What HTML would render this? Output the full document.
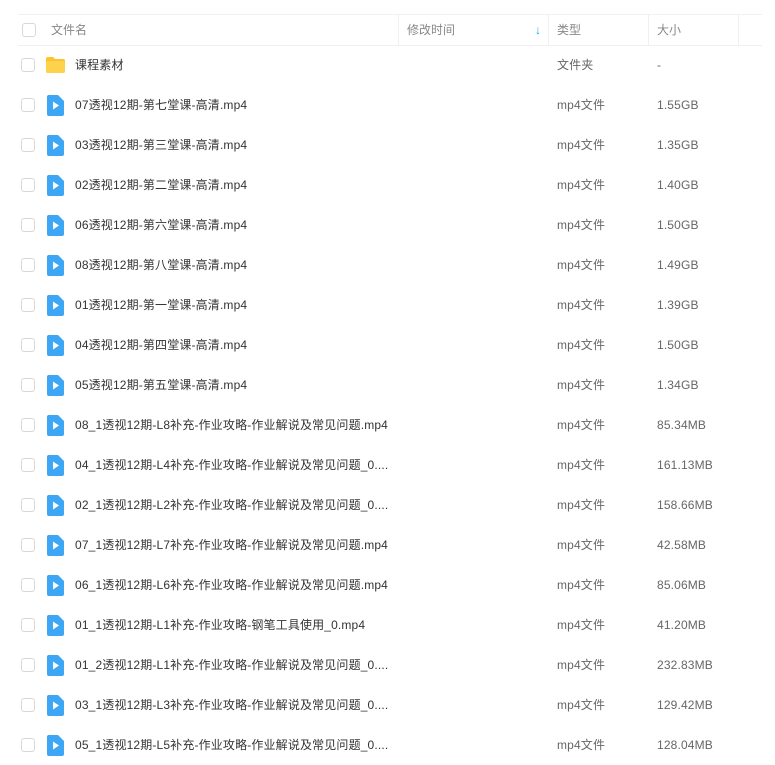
<!DOCTYPE html>
<html><head><meta charset="utf-8"><style>
body{margin:0;background:#fff;font-family:"Liberation Sans","Noto Sans CJK SC",sans-serif;font-size:12px;color:#424e67;}
.hdr{position:absolute;top:14px;left:18px;width:744px;height:30px;border-top:1px solid #f0f0f0;border-bottom:1px solid #f0f0f0;color:#888;}
.hdr span{position:absolute;top:0;line-height:30px;height:30px}
.div{position:absolute;top:0;width:1px;height:30px;background:#f0f0f0}
.cb{position:absolute;width:12px;height:12px;border:1px solid #d8d8d8;border-radius:3px;background:#fff}
.row{position:absolute;left:0;width:775px;height:40px;line-height:40px}
.row .cb{left:21px;top:13px}
.row span{position:absolute;top:0;height:40px;line-height:40px;letter-spacing:0.15px}
.row .n{left:75px;color:#333}
.row .t{left:557px;color:#666}
.row .s{left:657px;color:#666}
.ic{position:absolute;left:47px;top:10px}
</style></head><body>
<div class="hdr">
<div class="cb" style="left:4px;top:8px"></div>
<span style="left:33px">文件名</span>
<div class="div" style="left:380px"></div>
<span style="left:389px">修改时间</span>
<span style="left:517px;color:#09aaff;font-weight:bold">↓</span>
<div class="div" style="left:530px"></div>
<span style="left:539px">类型</span>
<div class="div" style="left:630px"></div>
<span style="left:639px">大小</span>
<div class="div" style="left:720px"></div>
</div>
<div id="rows"></div>
<script>
var d=[["课程素材","文件夹","-",1],
["07透视12期-第七堂课-高清.mp4","mp4文件","1.55GB"],
["03透视12期-第三堂课-高清.mp4","mp4文件","1.35GB"],
["02透视12期-第二堂课-高清.mp4","mp4文件","1.40GB"],
["06透视12期-第六堂课-高清.mp4","mp4文件","1.50GB"],
["08透视12期-第八堂课-高清.mp4","mp4文件","1.49GB"],
["01透视12期-第一堂课-高清.mp4","mp4文件","1.39GB"],
["04透视12期-第四堂课-高清.mp4","mp4文件","1.50GB"],
["05透视12期-第五堂课-高清.mp4","mp4文件","1.34GB"],
["08_1透视12期-L8补充-作业攻略-作业解说及常见问题.mp4","mp4文件","85.34MB"],
["04_1透视12期-L4补充-作业攻略-作业解说及常见问题_0....","mp4文件","161.13MB"],
["02_1透视12期-L2补充-作业攻略-作业解说及常见问题_0....","mp4文件","158.66MB"],
["07_1透视12期-L7补充-作业攻略-作业解说及常见问题.mp4","mp4文件","42.58MB"],
["06_1透视12期-L6补充-作业攻略-作业解说及常见问题.mp4","mp4文件","85.06MB"],
["01_1透视12期-L1补充-作业攻略-钢笔工具使用_0.mp4","mp4文件","41.20MB"],
["01_2透视12期-L1补充-作业攻略-作业解说及常见问题_0....","mp4文件","232.83MB"],
["03_1透视12期-L3补充-作业攻略-作业解说及常见问题_0....","mp4文件","129.42MB"],
["05_1透视12期-L5补充-作业攻略-作业解说及常见问题_0....","mp4文件","128.04MB"]];
var h="";
d.forEach(function(r,i){
var ic=r[3]?'<svg class="ic" style="left:45px;top:11px" width="21" height="18"><path d="M1 3a2 2 0 0 1 2-2h5l2 2h8a2 2 0 0 1 2 2v10a2 2 0 0 1-2 2H3a2 2 0 0 1-2-2z" fill="#ffc22e"/><rect x="1" y="5" width="19" height="12" rx="2" fill="#ffd24d"/></svg>'
:'<svg class="ic" width="17" height="21"><path d="M2 0h9l6 6v13a2 2 0 0 1-2 2H2a2 2 0 0 1-2-2V2a2 2 0 0 1 2-2z" fill="#3ea7f5"/><path d="M6 6.5l6 4-6 4z" fill="#fff"/></svg>';
h+='<div class="row" style="top:'+(45+i*40)+'px"><div class="cb"></div>'+ic+'<span class="n">'+r[0]+'</span><span class="t">'+r[1]+'</span><span class="s">'+r[2]+'</span></div>';
});
document.getElementById("rows").innerHTML=h;
</script>
</body></html>
